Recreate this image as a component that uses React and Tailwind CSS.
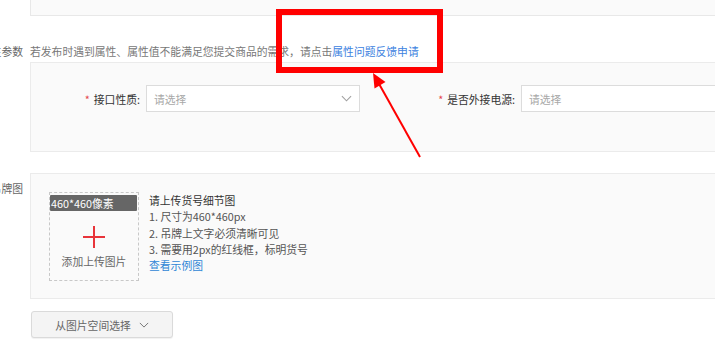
import React from 'react';

const font = "font-['Microsoft_YaHei','Noto_Sans_CJK_SC',sans-serif]";

const Chevron = ({ className }) => (
  <svg viewBox="0 0 12 7" className={className} fill="none" stroke="currentColor" strokeWidth="1.2">
    <path d="M1 1l5 5 5-5" />
  </svg>
);

const SelectBox = ({ arrow }) => (
  <div className="ml-[6px] w-[214px] h-[27px] bg-white border border-[#dcdcdc] flex items-center justify-between px-[7px] shrink-0">
    <span className="text-[#a8a8a8]">请选择</span>
    {arrow && <Chevron className="w-[11px] h-[7px] text-[#a0a0a0]" />}
  </div>
);

const Field = ({ label, width, arrow }) => (
  <div className="flex items-center">
    <div className={`${width} text-right text-[#333] shrink-0`}>
      <span className="text-[#e5484d] mr-[4px]">*</span>
      {label}:
    </div>
    <SelectBox arrow={arrow} />
  </div>
);

export default function App() {
  return (
    <div className={`relative w-[715px] h-[343px] overflow-hidden bg-white text-[10.8px] leading-[16px] ${font}`}>
      <div className="-ml-[57px] w-[820px] flex flex-col">
        {/* top panel remainder */}
        <div className="flex">
          <div className="w-[80px] shrink-0" />
          <div className="ml-[7px] flex-1 h-[16px] bg-[#fafafa] border-x border-b border-[#e8e8e8]" />
        </div>

        {/* attribute params */}
        <div className="flex mt-[27px]">
          <div className="w-[80px] shrink-0 text-right text-[#666]">属性参数</div>
          <div className="ml-[7px] flex-1 text-[#777]">
            若发布时遇到属性、属性值不能满足您提交商品的需求，请点击
            <span className="text-[#3c82e0]">属性问题反馈申请</span>
          </div>
        </div>
        <div className="flex mt-[3px]">
          <div className="w-[80px] shrink-0" />
          <div className="ml-[7px] flex-1 h-[90px] bg-[#fafafa] border border-[#ebebeb] pt-[22px] flex items-start">
            <Field label="接口性质" width="w-[109px]" arrow />
            <Field label="是否外接电源" width="w-[155px]" />
          </div>
        </div>

        {/* tag image */}
        <div className="flex mt-[21px]">
          <div className="w-[80px] shrink-0 text-right text-[#666] pt-[7px]">吊牌图</div>
          <div className="ml-[7px] flex-1 bg-[#fafafa] border border-[#ebebeb] pt-[18px] pb-[17px] px-[18px] flex items-start">
            <div className="w-[90px] h-[89px] border border-dashed border-[#c8c8c8] flex flex-col shrink-0">
              <div className="mt-[2px] mr-[1px] h-[16px] bg-[#666] text-white pl-[1px] leading-[16px] rounded-[1px]">460*460像素</div>
              <div className="flex justify-center mt-[15px]">
                <div className="relative w-[22px] h-[22px]">
                  <div className="absolute left-0 right-0 top-[10px] h-[2px] bg-[#e8343a]" />
                  <div className="absolute top-0 bottom-0 left-[10px] w-[2px] bg-[#e8343a]" />
                </div>
              </div>
              <div className="text-center text-[#666] mt-[5px]">添加上传图片</div>
            </div>
            <div className="ml-[10px] leading-[16.3px] text-[#555]">
              <div className="text-[#333]">请上传货号细节图</div>
              <div>1. 尺寸为460*460px</div>
              <div>2. 吊牌上文字必须清晰可见</div>
              <div>3. 需要用2px的红线框，标明货号</div>
              <div className="text-[#2f86d6]">查看示例图</div>
            </div>
          </div>
        </div>

        {/* picture space button */}
        <div className="flex mt-[12px]">
          <div className="w-[80px] shrink-0" />
          <div className="ml-[8px] w-[142px] h-[27px] bg-[#f4f4f4] border border-[#dadada] rounded-[3px] shadow-[0_1px_1px_rgba(0,0,0,0.06)] flex items-center justify-center gap-[8px] text-[#666]">
            <span>从图片空间选择</span>
            <Chevron className="w-[10px] h-[6px] text-[#777]" />
          </div>
        </div>
      </div>

      {/* annotation overlay */}
      <div className="absolute left-[276px] top-[9px] w-[167px] h-[64px] border-[6px] border-[#ff0000]" />
      <svg className="absolute left-0 top-0 w-[715px] h-[343px] pointer-events-none" viewBox="0 0 715 343">
        <line x1="420" y1="157" x2="378" y2="82" stroke="#ff0000" strokeWidth="2" />
        <polygon points="373,73 385.5,82 374.5,88.5" fill="#ff0000" />
      </svg>
    </div>
  );
}
